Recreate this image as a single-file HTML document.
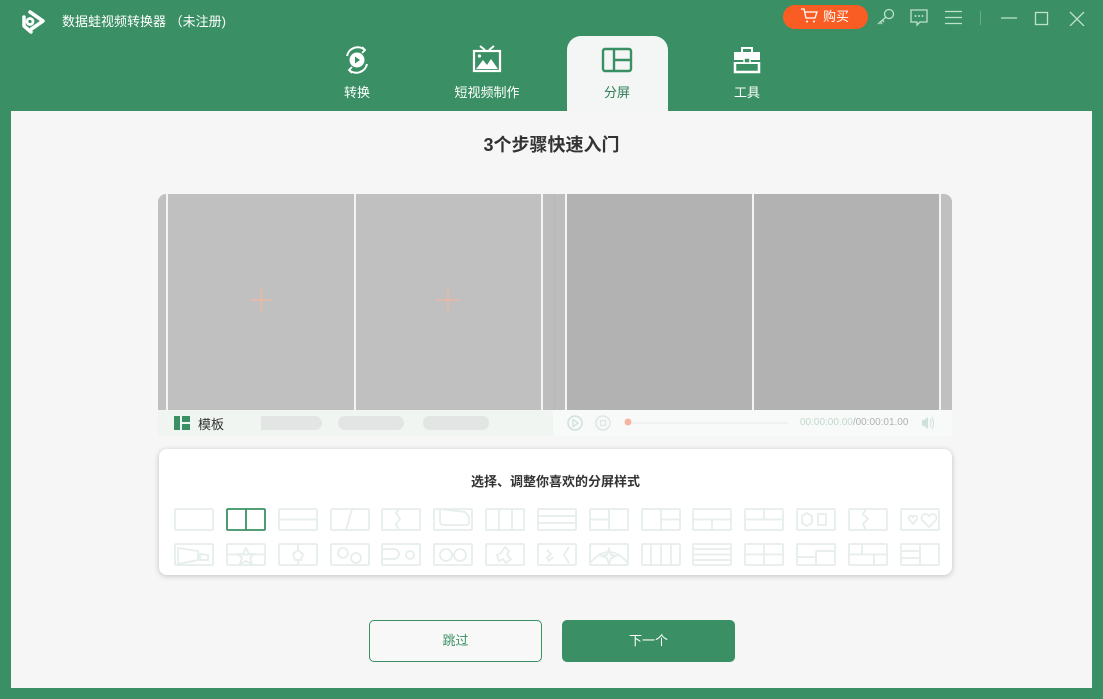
<!DOCTYPE html>
<html><head><meta charset="utf-8"><style>
*{margin:0;padding:0;box-sizing:border-box}
body{width:1103px;height:699px;background:#3a9064;font-family:"Liberation Sans","Noto Sans CJK SC",sans-serif;position:relative;overflow:hidden}
.a{position:absolute}
.w{color:#fff}
.tab{position:absolute;top:36px;width:100px;height:75px;text-align:center;color:#fff;font-size:13px}
.tab svg{display:block;margin:8px auto 0}
.tab span{display:block;margin-top:6px}
.g{position:absolute;background:#c0c0c0;top:194px;height:216px}
.d{position:absolute;background:#b2b2b2;top:194px;height:216px}
.wl{position:absolute;background:#f4f4f4;top:194px;height:216px;width:2px}
</style></head><body>
<svg class="a" style="left:20px;top:8px" width="28" height="28" viewBox="0 0 28 28"><path d="M10 4 L23 13 L10 22 M4 9 L4 18 L11 24" fill="none" stroke="#fff" stroke-width="3.5" stroke-linejoin="round" stroke-linecap="round"/><circle cx="10" cy="13.5" r="3" fill="none" stroke="#fff" stroke-width="2.8"/></svg>
<div class="a w" style="left:62px;top:11px;font-size:13px">数据蛙视频转换器 （未注册)</div>
<div class="a" style="left:783px;top:5px;width:85px;height:24px;border-radius:12px;background:#fa5d24;color:#fff;font-size:13px;line-height:24px;padding-left:40px">购买</div>
<svg class="a" style="left:800px;top:8px" width="18" height="16" viewBox="0 0 18 16"><path d="M1 1h3l2 9h9l2-6H5" fill="none" stroke="#fff" stroke-width="1.3"/><circle cx="7" cy="13.5" r="1" fill="#fff"/><circle cx="14" cy="13.5" r="1" fill="#fff"/></svg>
<svg class="a" style="left:876px;top:8px" width="20" height="18" viewBox="0 0 20 18"><circle cx="13" cy="6" r="4.5" fill="none" stroke="#bfe0cd" stroke-width="1.3"/><path d="M10 9 L2 16 M4 14l2 2M6 12l2 2" stroke="#bfe0cd" stroke-width="1.3"/></svg>
<svg class="a" style="left:909px;top:9px" width="20" height="18" viewBox="0 0 20 18"><path d="M2 1h16v12H11l-3 3v-3H2z" fill="none" stroke="#bfe0cd" stroke-width="1.3"/><circle cx="6.5" cy="7" r="1" fill="#bfe0cd"/><circle cx="10" cy="7" r="1" fill="#bfe0cd"/><circle cx="13.5" cy="7" r="1" fill="#bfe0cd"/></svg>
<svg class="a" style="left:945px;top:10px" width="18" height="15"><path d="M0 1.5h17M0 7.5h17M0 13.5h17" stroke="#bfe0cd" stroke-width="1.2"/></svg>
<div class="a" style="left:980px;top:11px;width:1px;height:14px;background:#6cab89"></div>
<svg class="a" style="left:1000px;top:10px" width="90" height="16"><path d="M1 8h16" stroke="#bfe0cd" stroke-width="1.3"/><rect x="35.5" y="2.5" width="12" height="12" fill="none" stroke="#bfe0cd" stroke-width="1.3"/><path d="M70 2l14 14M84 2L70 16" stroke="#bfe0cd" stroke-width="1.3"/></svg>
<div class="tab" style="left:307px"><svg width="32" height="32" viewBox="0 0 32 32"><path d="M6 12 A11 11 0 0 1 24 6 M26 20 A11 11 0 0 1 8 26" fill="none" stroke="#fff" stroke-width="2"/><path d="M21 3l3 3-3 3M11 29l-3-3 3-3" fill="none" stroke="#fff" stroke-width="1.8"/><circle cx="16" cy="16" r="7.5" fill="#fff"/><path d="M14 12.5v7l5-3.5z" fill="#3a9064"/></svg><span>转换</span></div>
<div class="tab" style="left:437px"><svg width="32" height="32" viewBox="0 0 32 32"><path d="M9 2l5 4M23 2l-5 4" stroke="#fff" stroke-width="2"/><rect x="3" y="7" width="26" height="20" fill="none" stroke="#fff" stroke-width="2.2"/><circle cx="8.5" cy="12" r="1.6" fill="#fff"/><path d="M5 25l7-9 4 5 4-6 7 10z" fill="#fff"/></svg><span>短视频制作</span></div>
<div class="a" style="left:567px;top:36px;width:101px;height:80px;background:#f3f6f4;border-radius:14px 14px 0 0"></div>
<div class="tab" style="left:567px;color:#2f7d55"><svg width="32" height="32" viewBox="0 0 32 32"><rect x="2" y="5" width="28" height="22" rx="2" fill="none" stroke="#3a9064" stroke-width="2.4"/><path d="M13 5v22M13 16h17" stroke="#3a9064" stroke-width="2.4"/></svg><span>分屏</span></div>
<div class="tab" style="left:697px"><svg width="32" height="32" viewBox="0 0 32 32"><path d="M11 8V4h10v4" fill="none" stroke="#fff" stroke-width="2"/><rect x="3" y="8" width="26" height="8" fill="#fff"/><path d="M4 18v10h24V18" fill="none" stroke="#fff" stroke-width="2.5"/><rect x="4" y="18" width="24" height="2" fill="#fff"/><rect x="13" y="14" width="6" height="5" fill="#3a9064" stroke="#fff" stroke-width="1.5"/></svg><span>工具</span></div>
<div class="a" style="left:11px;top:111px;width:1081px;height:577px;background:#f6f6f6"></div>
<div class="a" style="left:0;top:143px;width:1103px;text-align:center;font-size:18px;font-weight:bold;color:#333;line-height:24px;margin-top:-10px">3个步骤快速入门</div>
<div class="g" style="left:158px;width:395px;border-radius:8px 0 0 0"></div>
<div class="g" style="left:543px;width:22px;background:#bdbdbd"></div>
<div class="a" style="left:554px;top:194px;width:1px;height:216px;background:#b8b8b8"></div>
<div class="d" style="left:566px;width:375px"></div>
<div class="g" style="left:941px;width:11px;border-radius:0 8px 0 0"></div>
<div class="wl" style="left:166px"></div><div class="wl" style="left:354px"></div><div class="wl" style="left:541px"></div>
<div class="wl" style="left:565px"></div><div class="wl" style="left:752px"></div><div class="wl" style="left:939px"></div>
<svg class="a" style="left:250px;top:289px" width="22" height="22"><path d="M11 0v22M0 11h22" stroke="#f4b79e" stroke-width="1.3"/></svg>
<svg class="a" style="left:437px;top:289px" width="22" height="22"><path d="M11 0v22M0 11h22" stroke="#f4b79e" stroke-width="1.3"/></svg>
<div class="a" style="left:158px;top:410px;width:395px;height:26px;background:#f0f5f2"></div>
<div class="a" style="left:553px;top:410px;width:399px;height:26px;background:#f8faf9"></div>
<svg class="a" style="left:174px;top:416px" width="16" height="14"><rect width="6" height="14" fill="#3a9064"/><rect x="8" width="8" height="6" fill="#3a9064"/><rect x="8" y="8" width="8" height="6" fill="#3a9064"/></svg>
<div class="a" style="left:198px;top:414px;font-size:13px;color:#333">模板</div>
<div class="a" style="left:224px;top:416px;width:98px;height:14px;border-radius:7px;background:#e3e5e4;clip-path:inset(0 0 0 37px)"></div>
<div class="a" style="left:338px;top:416px;width:66px;height:14px;border-radius:7px;background:#e3e5e4"></div>
<div class="a" style="left:423px;top:416px;width:66px;height:14px;border-radius:7px;background:#e3e5e4"></div>
<svg class="a" style="left:566px;top:414px" width="380" height="18"><circle cx="9" cy="9" r="7" fill="none" stroke="#cfe2d7" stroke-width="1.5"/><path d="M7 5.5v7l5-3.5z" fill="none" stroke="#cfe2d7" stroke-width="1.3"/><circle cx="37" cy="9" r="7" fill="none" stroke="#dde8e2" stroke-width="1.5"/><rect x="34.5" y="6.5" width="5" height="5" fill="none" stroke="#dde8e2" stroke-width="1.2"/><circle cx="62" cy="8" r="3.5" fill="#f6b4a2"/><path d="M66 9h156" stroke="#edf1ef" stroke-width="2"/><path d="M356 6h2v6h-2zM358 6l4-3v12l-4-3" fill="#cfe2d7"/><path d="M364 5q2 4 0 8M366 3q3 6 0 12" fill="none" stroke="#cfe2d7"/></svg>
<div class="a" style="left:800px;top:417px;font-size:10px;color:#c3d9cd">00:00:00.00<span style="color:#b0b0b0">/00:00:01.00</span></div>
<div class="a" style="left:159px;top:449px;width:793px;height:126px;background:#fff;border-radius:8px;box-shadow:0 1px 6px rgba(0,0,0,.22)"></div>
<div class="a" style="left:159px;top:471px;width:793px;text-align:center;font-size:13px;font-weight:bold;color:#333">选择、调整你喜欢的分屏样式</div>
<svg class="a" style="left:0;top:0" width="1103" height="699">
<g fill="none" stroke="#e6eeea" stroke-width="1.8">
<g transform="translate(174,508)"><rect x="1" y="1" width="38" height="21" rx="1"/></g>
<g transform="translate(226,508)" stroke="#3a9064"><rect x="1" y="1" width="38" height="21" rx="1"/><path d="M20 1v21"/></g>
<g transform="translate(278,508)"><rect x="1" y="1" width="38" height="21" rx="1"/><path d="M1 11.5h38"/></g>
<g transform="translate(330,508)"><rect x="1" y="1" width="38" height="21" rx="1"/><path d="M22 1l-6 21"/></g>
<g transform="translate(381,508)"><rect x="1" y="1" width="38" height="21" rx="1"/><path d="M18 1l-3 4 4 6-4 5 3 6"/></g>
<g transform="translate(433,508)"><rect x="1" y="1" width="38" height="21" rx="1"/><path d="M7 1v12q0 4 4 4h22q3 0 3-3v-5l-4-5z"/></g>
<g transform="translate(485,508)"><rect x="1" y="1" width="38" height="21" rx="1"/><path d="M14 1v21M27 1v21"/></g>
<g transform="translate(537,508)"><rect x="1" y="1" width="38" height="21" rx="1"/><path d="M1 8h38M1 15h38"/></g>
<g transform="translate(589,508)"><rect x="1" y="1" width="38" height="21" rx="1"/><path d="M1 11.5h19M20 1v21"/></g>
<g transform="translate(641,508)"><rect x="1" y="1" width="38" height="21" rx="1"/><path d="M20 11.5h19M20 1v21"/></g>
<g transform="translate(692,508)"><rect x="1" y="1" width="38" height="21" rx="1"/><path d="M1 11.5h38M20 11.5v11"/></g>
<g transform="translate(744,508)"><rect x="1" y="1" width="38" height="21" rx="1"/><path d="M1 11.5h38M20 1v11"/></g>
<g transform="translate(796,508)"><rect x="1" y="1" width="38" height="21" rx="1"/><path d="M6 8l5-3 5 3v7l-5 3-5-3zM22 6h8v11h-8z"/></g>
<g transform="translate(848,508)"><rect x="1" y="1" width="38" height="21" rx="1"/><path d="M18 1l-3 5 5 5-5 5 3 6"/></g>
<g transform="translate(900,508)"><rect x="1" y="1" width="38" height="21" rx="1"/><path d="M13 16l-4-5a2 2 0 0 1 4-2a2 2 0 0 1 4 2zM29 19l-7-7a4 4 0 0 1 7-4a4 4 0 0 1 7 4z"/></g>
<g transform="translate(174,543)"><rect x="1" y="1" width="38" height="21" rx="1"/><path d="M4 5l20 3v9l-20 4zM26 11l8 1v5h-8z"/></g>
<g transform="translate(226,543)"><rect x="1" y="1" width="38" height="21" rx="1"/><path d="M1 11.5h38M20 5l3 6h5l-4 4 2 6-6-3-6 3 2-6-4-4h5z"/></g>
<g transform="translate(278,543)"><rect x="1" y="1" width="38" height="21" rx="1"/><path d="M20 1v6M20 7l5 4-2 6h-6l-2-6zM20 17v5"/></g>
<g transform="translate(330,543)"><rect x="1" y="1" width="38" height="21" rx="1"/><circle cx="13" cy="10" r="5"/><circle cx="26" cy="15" r="5"/></g>
<g transform="translate(381,543)"><rect x="1" y="1" width="38" height="21" rx="1"/><path d="M1 6h12a5 5 0 0 1 0 10H1"/><circle cx="29" cy="12" r="4"/></g>
<g transform="translate(433,543)"><rect x="1" y="1" width="38" height="21" rx="1"/><circle cx="13" cy="12" r="6"/><circle cx="27" cy="12" r="6"/></g>
<g transform="translate(485,543)"><rect x="1" y="1" width="38" height="21" rx="1"/><path d="M20 4l4 4-2 4 4 4-5 4-3-4-4 2-2-6 4-2z"/></g>
<g transform="translate(537,543)"><rect x="1" y="1" width="38" height="21" rx="1"/><path d="M10 7l4 4-4 4 2 3 4-4M32 4l-5 8 5 8"/></g>
<g transform="translate(589,543)"><rect x="1" y="1" width="38" height="21" rx="1"/><path d="M1 20q19-22 38 0M20 6l2 6 5 1-5 2-2 6-2-6-5-2 5-1z"/></g>
<g transform="translate(641,543)"><rect x="1" y="1" width="38" height="21" rx="1"/><path d="M10 1v21M20 1v21M30 1v21"/></g>
<g transform="translate(692,543)"><rect x="1" y="1" width="38" height="21" rx="1"/><path d="M1 6h38M1 11.5h38M1 17h38"/></g>
<g transform="translate(744,543)"><rect x="1" y="1" width="38" height="21" rx="1"/><path d="M1 11.5h38M20 1v21"/></g>
<g transform="translate(796,543)"><rect x="1" y="1" width="38" height="21" rx="1"/><path d="M1 14h19M20 8h19M20 8v14"/></g>
<g transform="translate(848,543)"><rect x="1" y="1" width="38" height="21" rx="1"/><path d="M1 11.5h38M14 1v11M26 12v10"/></g>
<g transform="translate(900,543)"><rect x="1" y="1" width="38" height="21" rx="1"/><path d="M1 8h19M1 15h19M20 1v21"/></g>
</g></svg>
<div class="a" style="left:369px;top:620px;width:173px;height:42px;border:1px solid #3a9064;border-radius:5px;text-align:center;line-height:40px;font-size:13px;color:#3a9064;background:#f8f8f8">跳过</div>
<div class="a" style="left:562px;top:620px;width:173px;height:42px;border-radius:5px;text-align:center;line-height:42px;font-size:13px;color:#fff;background:#3a9064">下一个</div>
</body></html>
